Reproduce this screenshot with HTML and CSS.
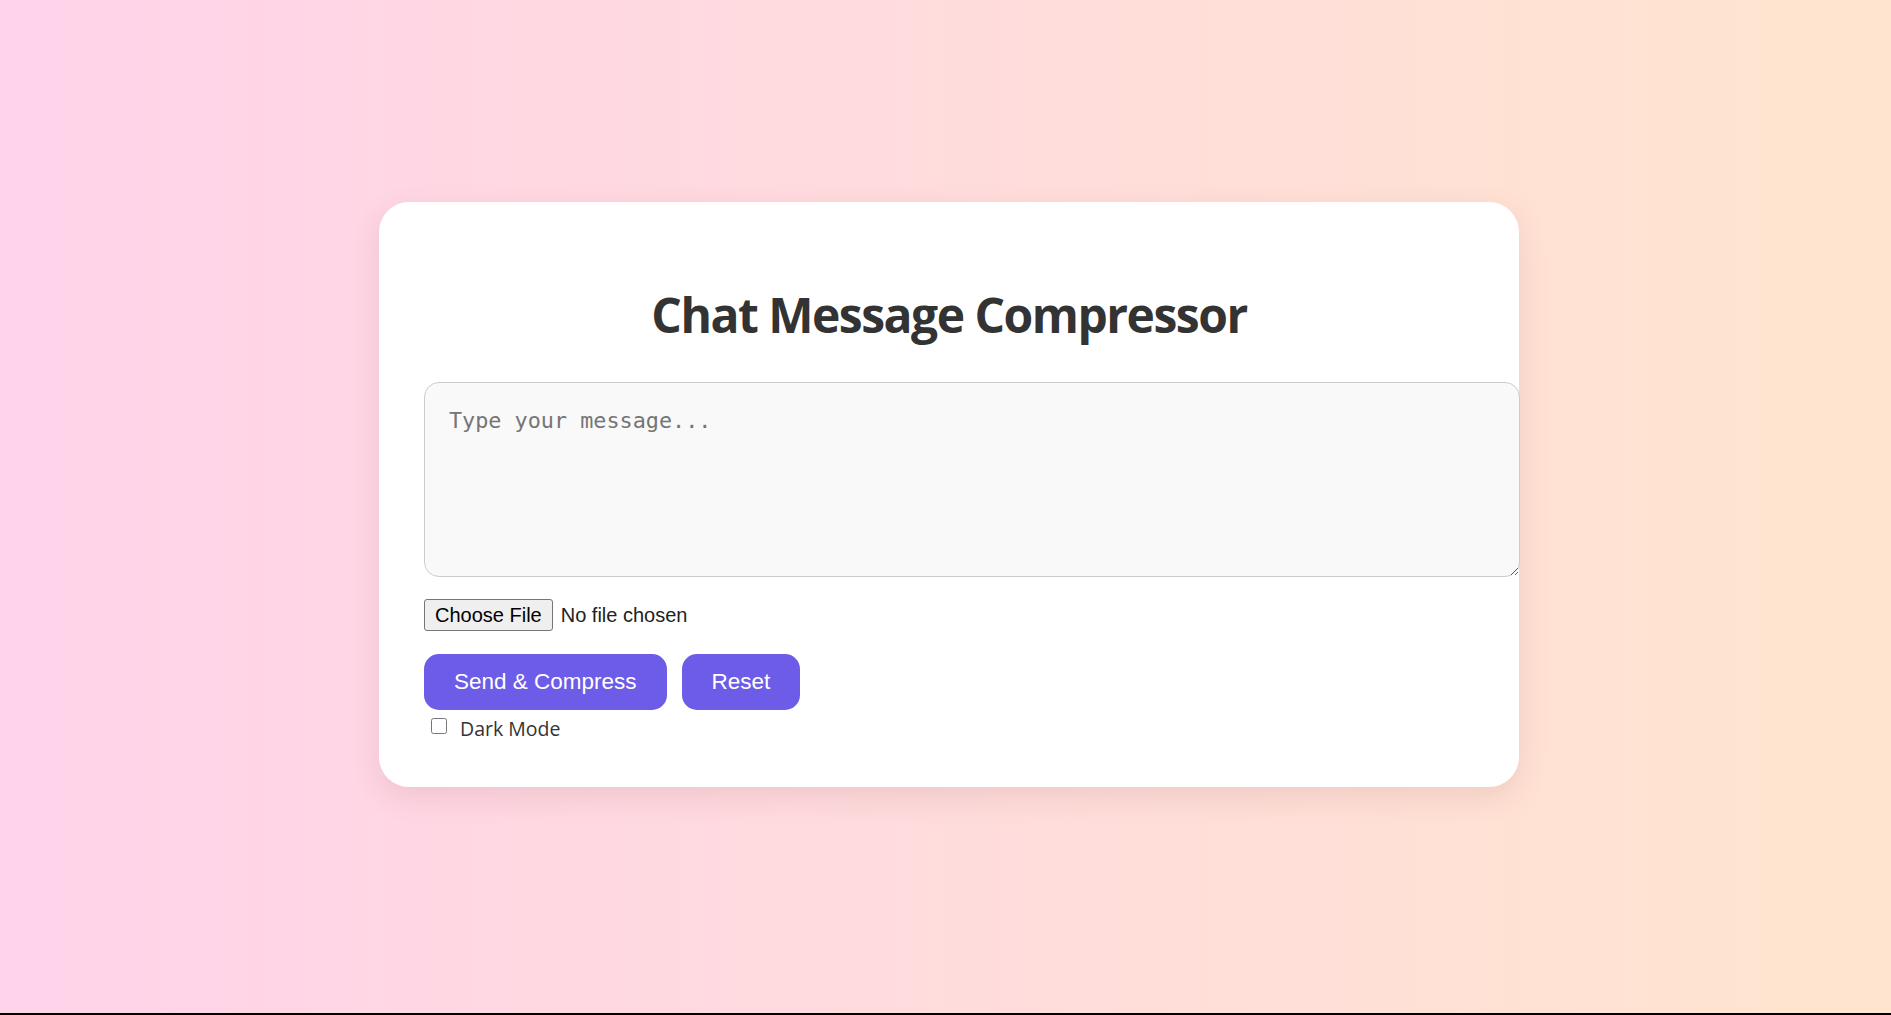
FILE: index.html
```html
<!DOCTYPE html>
<html lang="en">
<head>
<meta charset="utf-8">
<title>Chat Message Compressor</title>
<link rel="stylesheet" href="styles.css">
</head>
<body>
  <main class="card">
    <h1 class="title">Chat Message Compressor</h1>
    <textarea class="message" placeholder="Type your message..."></textarea>
    <div class="file-row">
      <input class="file-input" type="file">
    </div>
    <div class="actions">
      <button class="btn" type="button">Send &amp; Compress</button>
      <button class="btn" type="button">Reset</button>
    </div>
    <label class="dark-toggle">
      <input class="dark-check" type="checkbox">
      <span>Dark Mode</span>
    </label>
  </main>
</body>
</html>
```

FILE: styles.css
```css
html {
  background: #000;
}

body {
  margin: 0;
  height: 1013px;
  box-sizing: border-box;
  padding: 202px 0 0 7px;
  display: flex;
  justify-content: center;
  align-items: flex-start;
  background: linear-gradient(to right, #ffd3ea, #ffe5cf);
  font-family: "Open Sans", "Noto Sans", sans-serif;
  color: #333;
}

.card {
  width: 1140px;
  box-sizing: border-box;
  padding: 45px 45px 45px 45px;
  background: #fff;
  border-radius: 30px;
  box-shadow: 0 10px 30px rgba(120, 60, 60, 0.12);
}

.title {
  margin: 34px 0 33px;
  font-size: 48px;
  font-weight: 700;
  line-height: 68px;
  text-align: center;
  color: #333;
  letter-spacing: -1.5px;
}

.message {
  display: block;
  width: 1096px;
  height: 195px;
  box-sizing: border-box;
  margin: 0;
  padding: 25px 24px 20px;
  border: 1px solid #ccc;
  border-radius: 15px;
  background: #f9f9f9;
  font-family: "DejaVu Sans Mono", "Liberation Mono", monospace;
  font-size: 21.8px;
  color: #333;
}

.message::placeholder {
  color: #757575;
}

.file-row {
  margin-top: 22px;
  height: 32px;
}

.file-input {
  font-family: "Liberation Sans", Arial, sans-serif;
  font-size: 20px;
  color: #222;
  margin: 0;
}

.file-input::file-selector-button {
  font-family: "Liberation Sans", Arial, sans-serif;
  font-size: 20px;
  height: 32px;
  padding: 0 10px;
  margin-right: 8px;
  border: 1px solid #767676;
  border-radius: 3px;
  background: #efefef;
  color: #000;
}

.actions {
  display: flex;
  gap: 15px;
  margin-top: 23px;
}

.btn {
  height: 56px;
  padding: 0 30px;
  border: none;
  border-radius: 15px;
  background: #6c5ce7;
  color: #fff;
  font-family: "Liberation Sans", Arial, sans-serif;
  font-size: 22.5px;
}

.dark-toggle {
  display: flex;
  align-items: flex-start;
  margin-top: 5px;
  font-size: 19.5px;
  line-height: 27px;
  color: #333;
}

.dark-check {
  width: 16px;
  height: 16px;
  margin: 3px 13px 0 7px;
}
```
